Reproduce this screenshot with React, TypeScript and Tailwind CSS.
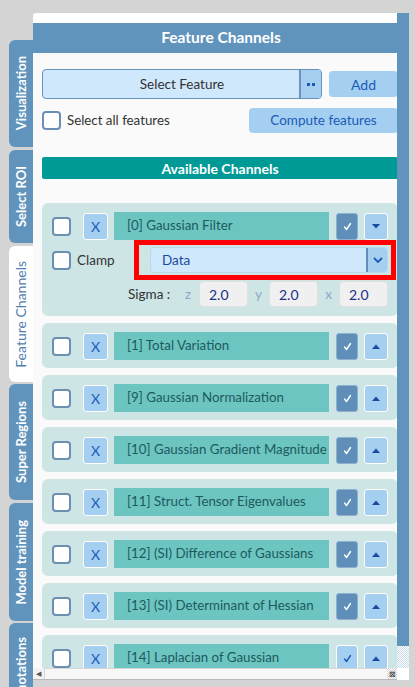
import React from "react";

function Tab({ label, h, mt, active }: { label: string; h: number; mt: number; active?: boolean }) {
  return (
    <div
      className={
        "flex w-[24px] shrink-0 items-center justify-center rounded-l-[6px] " +
        (active ? "bg-white text-[#4f80ad] text-[14px]" : "bg-[#6194bd] text-white text-[13px] font-bold")
      }
      style={{ height: h, marginTop: mt }}
    >
      <span className="rotate-180 whitespace-nowrap leading-none [writing-mode:vertical-rl]">{label}</span>
    </div>
  );
}

function Checkbox() {
  return <div className="h-[19px] w-[19px] shrink-0 rounded-[4px] border-2 border-[#6b8fb3] bg-white" />;
}

function Tri({ up }: { up: boolean }) {
  return (
    <svg width="8" height="5" viewBox="0 0 8 5">
      {up ? <path d="M0 5 L4 0.5 L8 5 Z" fill="#1a4aa0" /> : <path d="M0 0 L8 0 L4 4.5 Z" fill="#1a4aa0" />}
    </svg>
  );
}

function Check({ color }: { color: string }) {
  return (
    <svg width="9" height="9" viewBox="0 0 9 9">
      <path d="M1.5 5 L3.5 7.5 L7.5 1.5" fill="none" stroke={color} strokeWidth="1.4" strokeLinecap="round" strokeLinejoin="round" />
    </svg>
  );
}

function MainRow({ name, up, light }: { name: string; up: boolean; light?: boolean }) {
  return (
    <div className="flex h-[28px] items-center">
      <Checkbox />
      <div className="ml-[12px] flex h-[27px] w-[25px] shrink-0 items-center justify-center rounded-[3px] border border-white bg-[#a5cff0] text-[14px] text-[#1a5bb8]">
        X
      </div>
      <div className="ml-[6px] flex h-[28px] w-[215px] shrink-0 items-center overflow-hidden whitespace-nowrap bg-[#6cc5c1] pl-[13px] text-[13.3px] text-[#1e5a5d]">
        {name}
      </div>
      <div
        className={
          "ml-[7px] flex h-[27px] w-[22px] shrink-0 items-center justify-center rounded-[3px] border " +
          (light ? "border-white bg-[#a5cff0]" : "border-[#8db0cf] bg-[#5f8fb9]")
        }
      >
        <Check color={light ? "#1a5bb8" : "#ffffff"} />
      </div>
      <div className="ml-[6px] flex h-[27px] w-[24px] shrink-0 items-center justify-center rounded-[3px] border border-white bg-[#a5cff0]">
        <Tri up={up} />
      </div>
    </div>
  );
}

function SigmaInput() {
  return (
    <div className="flex h-[26px] w-[49px] shrink-0 items-center rounded-[4px] border border-[#e0e0e0] bg-[#f0f0f0] pl-[9px] text-[14px] text-[#1a2f8a]">
      2.0
    </div>
  );
}

const channels = [
  "[1] Total Variation",
  "[9] Gaussian Normalization",
  "[10] Gaussian Gradient Magnitude",
  "[11] Struct. Tensor Eigenvalues",
  "[12] (SI) Difference of Gaussians",
  "[13] (SI) Determinant of Hessian",
  "[14] Laplacian of Gaussian",
];

export default function App() {
  return (
    <div className="flex h-[687px] w-[415px] overflow-hidden bg-[#d4d4d4] font-['Lato',sans-serif]">
      {/* tabs */}
      <div className="flex w-[33px] shrink-0 flex-col pl-[9px]">
        <Tab label="Visualization" h={107} mt={40} />
        <Tab label="Select ROI" h={93} mt={3} />
        <Tab label="Feature Channels" h={136} mt={3} active />
        <Tab label="Super Regions" h={116} mt={2} />
        <Tab label="Model training" h={118} mt={3} />
        <Tab label="Annotations" h={100} mt={2} />
      </div>

      {/* panel */}
      <div className="mt-[13px] flex h-[667px] w-[376px] shrink-0">
        <div className="flex w-[364px] flex-col">
          <div className="h-[10px] rounded-tl-[3px] bg-white" />
          <div className="flex h-[30px] items-center justify-center bg-[#6194bd] pl-[12px] text-[15.5px] font-bold text-white">
            Feature Channels
          </div>
          <div className="flex-1 overflow-hidden bg-[#fafafa] pl-[9px] pt-[16px]">
            <div className="flex w-[356px] flex-col">
              {/* select row */}
              <div className="flex h-[30px] items-center">
                <div className="flex h-[30px] w-[280px] overflow-hidden rounded-[4px] border border-[#6a93b8] bg-[#d0e8fb]">
                  <div className="flex flex-1 items-center justify-center pl-[22px] text-[13.5px] text-[#333333]">Select Feature</div>
                  <div className="flex w-[22px] items-center justify-center gap-[2px] border-l-2 border-[#6a93b8] bg-[#a5cff0]">
                    <div className="h-[3px] w-[3px] bg-[#1a5bb8]" />
                    <div className="h-[3px] w-[3px] bg-[#1a5bb8]" />
                  </div>
                </div>
                <div className="ml-[7px] flex h-[26px] w-[69px] items-center justify-center rounded-[4px] bg-[#a5cff0] text-[14px] text-[#1a5bb8]">
                  Add
                </div>
              </div>
              {/* select all row */}
              <div className="mt-[9px] flex h-[25px] items-center">
                <Checkbox />
                <span className="ml-[6px] text-[13.3px] text-[#333333]">Select all features</span>
                <div className="ml-auto flex h-[25px] w-[149px] items-center justify-center rounded-[4px] bg-[#a5cff0] text-[13.5px] text-[#1a5bb8]">
                  Compute features
                </div>
              </div>
              {/* available channels */}
              <div className="mt-[24px] flex h-[22px] items-center justify-center rounded-[2px] bg-[#009a96] text-[14px] font-bold text-white">
                Available Channels
              </div>

              {/* card 0 */}
              <div className="mt-[24px] flex flex-col rounded-[6px] bg-[#cde5e5] pb-[9px] pl-[10px] pt-[9px]">
                <MainRow name="[0] Gaussian Filter" up={false} />
                <div className="flex h-[40px] items-center">
                  <div className="flex w-[82px] shrink-0 items-center">
                    <Checkbox />
                    <span className="ml-[6px] text-[13.5px] text-[#333333]">Clamp</span>
                  </div>
                  <div className="flex h-[40px] w-[262px] shrink-0 items-center border-[5px] border-[#ff0000] pl-[11px]">
                    <div className="flex h-[26px] w-[238px] overflow-hidden rounded-[4px] border border-[#bcd6ec] bg-[#d0e8fb]">
                      <div className="flex flex-1 items-center pl-[11px] text-[13.5px] text-[#1a4aa0]">Data</div>
                      <div className="flex w-[21px] items-center justify-center border-l-2 border-[#5f8fb9] bg-[#a5cff0]">
                        <svg width="10" height="6" viewBox="0 0 10 6">
                          <path d="M1 1 L5 5 L9 1" fill="none" stroke="#1a5bb8" strokeWidth="1.8" />
                        </svg>
                      </div>
                    </div>
                  </div>
                </div>
                <div className="mt-[1px] flex h-[26px] items-center pl-[76px] text-[13.5px]">
                  <span className="w-[57px] shrink-0 text-[#333333]">Sigma :</span>
                  <span className="w-[14px] shrink-0 text-[#8aa9c4]">z</span>
                  <SigmaInput />
                  <span className="w-[21px] shrink-0 text-center text-[#8aa9c4]">y</span>
                  <SigmaInput />
                  <span className="w-[21px] shrink-0 text-center text-[#8aa9c4]">x</span>
                  <SigmaInput />
                </div>
              </div>

              {channels.map((c, i) => (
                <div key={c} className="mt-[7px] rounded-[6px] bg-[#cde5e5] pb-[8px] pl-[10px] pt-[9px]">
                  <MainRow name={c} up light={i === channels.length - 1} />
                </div>
              ))}
            </div>
          </div>
          {/* horizontal scrollbar */}
          <div className="flex h-[12px] border-b border-[#b8b8b8] bg-[#f2f2f2]">
            <div className="flex w-[11px] items-center justify-center text-[7px] leading-none text-[#555555]">◀</div>
            <div className="w-[343px] border-l border-t border-[#d8d8d8] bg-[#f7f7f7]" />
            <div className="flex w-[10px] items-center justify-center bg-[repeating-conic-gradient(#d0d0d0_0_25%,#ffffff_0_50%)] bg-[length:2px_2px] text-[8px] leading-none text-[#333333]">
              ⊠
            </div>
          </div>
        </div>
        {/* vertical scrollbar */}
        <div className="flex w-[12px] flex-col">
          <div className="h-[633px] bg-[#6194bd]" />
          <div className="h-[22px] bg-[repeating-conic-gradient(#c8dcea_0_25%,#ffffff_0_50%)] bg-[length:2px_2px]" />
          <div className="flex-1 bg-white" />
        </div>
      </div>
    </div>
  );
}
